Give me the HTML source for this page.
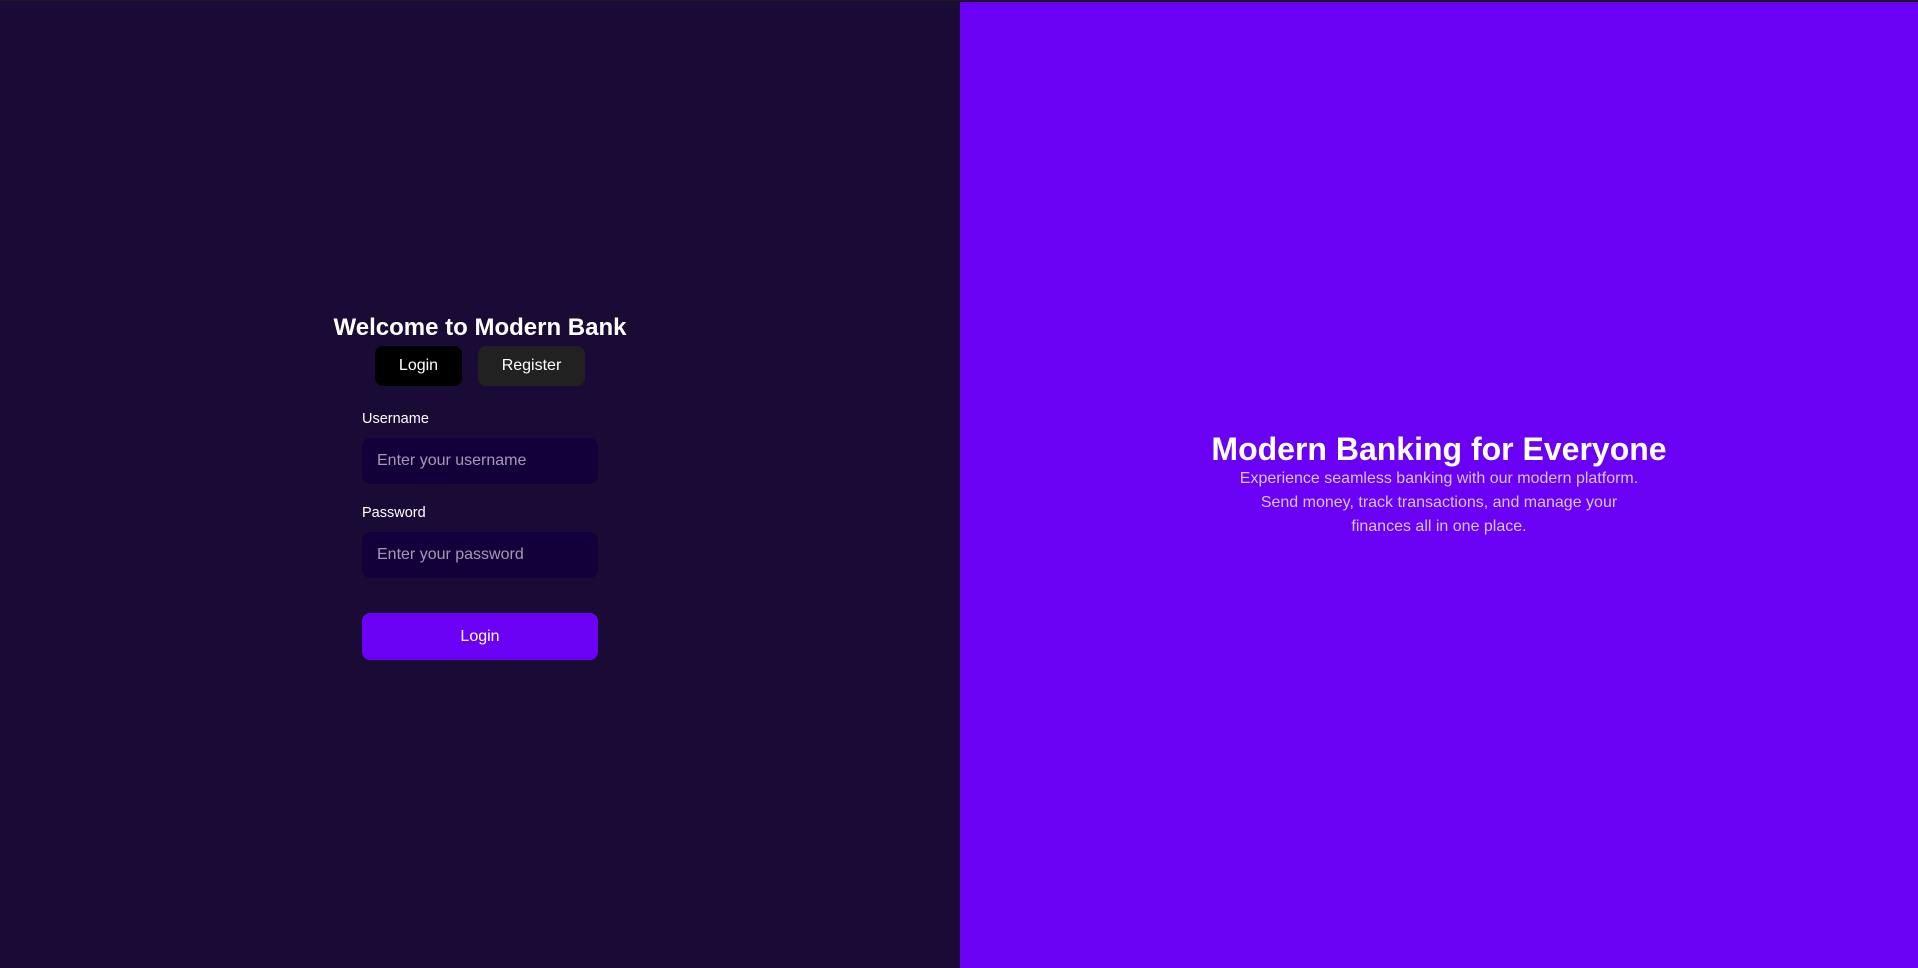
<!DOCTYPE html>
<html><head><meta charset="utf-8"><style>
*{box-sizing:border-box;margin:0;padding:0}
html,body{width:1918px;height:968px;overflow:hidden;font-family:"Liberation Sans",sans-serif}
body{position:relative;background:#190b35;border-top:1px solid #1a1a1a}
.left{position:absolute;left:0;top:1px;width:960px;height:967px;background:#190b35}
.right{position:absolute;left:960px;top:1px;width:958px;height:967px;background:#6a00f4}
.title{position:absolute;left:0;width:960px;text-align:center;top:312px;font-size:24px;font-weight:bold;color:#fff}
.tab{position:absolute;top:344px;height:40px;border-radius:8px;color:#fff;font-size:16px;text-align:center;line-height:40px}
.t1{left:375px;width:87px;background:#000}
.t2{left:478px;width:107px;background:#212121}
.lbl{position:absolute;left:362px;font-size:14.5px;color:#fff}
.inp{position:absolute;left:362px;width:236px;height:46px;border-radius:8px;background:#13003a;color:#a39bb5;font-size:16px;line-height:46px;padding-left:15px}
.btn{position:absolute;left:362px;top:611px;width:236px;height:47px;border-radius:8px;background:#6a00f4;color:#fff;font-size:16px;line-height:47px;text-align:center}
.h{position:absolute;left:0;width:958px;top:429px;text-align:center;color:#fff;font-size:32px;font-weight:bold}
.p{position:absolute;left:274px;width:410px;top:465px;text-align:center;color:#d6c4ff;font-size:16px;line-height:24px}
</style></head><body>
<div class="left">
<div class="title">Welcome to Modern Bank</div>
<div class="tab t1">Login</div>
<div class="tab t2">Register</div>
<div class="lbl" style="top:409px">Username</div>
<div class="inp" style="top:436px">Enter your username</div>
<div class="lbl" style="top:503px">Password</div>
<div class="inp" style="top:530px">Enter your password</div>
<div class="btn">Login</div>
</div>
<div class="right">
<div class="h">Modern Banking for Everyone</div>
<div class="p">Experience seamless banking with our modern platform. Send money, track transactions, and manage your finances all in one place.</div>
</div>
</body></html>
